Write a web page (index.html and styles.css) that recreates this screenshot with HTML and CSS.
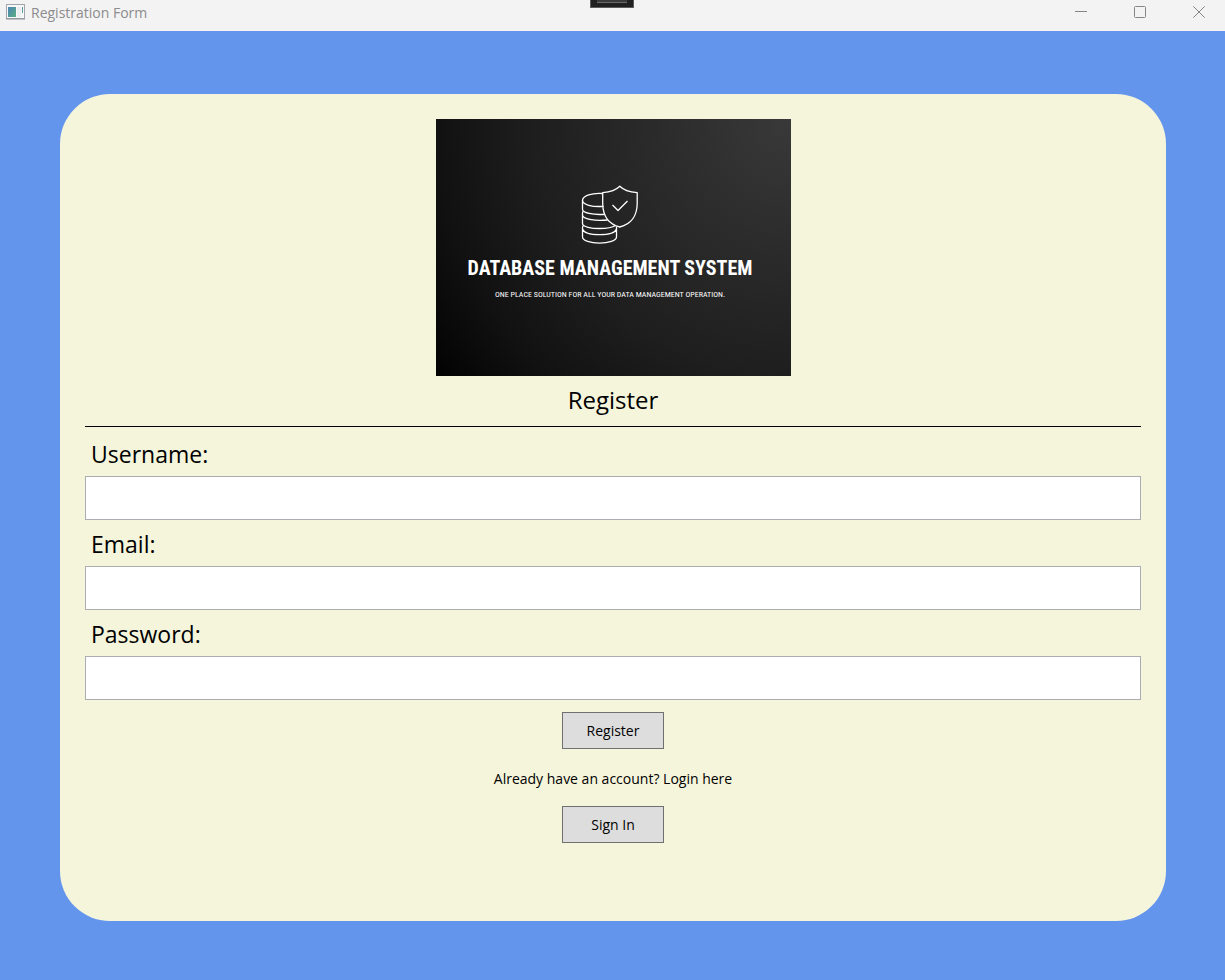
FILE: index.html
```html
<!DOCTYPE html>
<html lang="en">
<head>
<meta charset="utf-8">
<meta name="viewport" content="width=device-width, initial-scale=1">
<title>Registration Form</title>
<link rel="stylesheet" href="styles.css">
</head>
<body>
<header class="titlebar">
  <svg class="app-icon" viewBox="0 0 19 16" aria-hidden="true">
    <defs><linearGradient id="pane" x1="0" y1="0" x2="1" y2="1"><stop offset="0" stop-color="#4b86b4"/><stop offset="1" stop-color="#5cae85"/></linearGradient></defs>
    <rect x=".5" y=".5" width="18" height="14" fill="#f8f8f8" stroke="#a2a6ac"/>
    <path d="M0 15h19" stroke="#8b8f96"/>
    <rect x="2" y="3" width="8" height="10" fill="url(#pane)"/>
    <rect x="11" y="3" width="4" height="10" fill="#eceef0"/>
    <rect x="16" y="3" width="1" height="6" fill="url(#pane)"/>
  </svg>
  <span class="window-title">Registration Form</span>
  <span class="debug-tab" aria-hidden="true"></span>
  <div class="window-controls">
    <button type="button" class="window-button" aria-label="Minimize"><svg viewBox="0 0 12 12"><path d="M0 5.5h12"/></svg></button>
    <button type="button" class="window-button" aria-label="Maximize"><svg viewBox="0 0 12 12"><rect x=".5" y=".5" width="11" height="11" rx="1"/></svg></button>
    <button type="button" class="window-button" aria-label="Close"><svg viewBox="0 0 12 12"><path d="M.3.3l11.4 11.4M11.7.3L.3 11.7"/></svg></button>
  </div>
</header>
<main class="backdrop">
  <form class="card">
    <div class="logo">
      <svg class="logo-mark" viewBox="0 0 58 60" aria-hidden="true">
        <path d="M21.700 8.500C11 7.500 1.500 11 1.500 15.500C1.500 19.500 11 22.300 22.500 21.300"/>
        <path d="M1.500 15.500v9c0 3 10 5.800 22.500 4.800"/>
        <path d="M2.500 26c-.7.600-1 1.200-1 2v2.500c1.500 4 13 5.700 25 4.500M1.500 30v8.500c0 3.500 9 5 17 5c7 0 13-1 16-3"/>
        <path d="M2.500 40.500c-.7.600-1 1.200-1 2v1.500c1.500 4.500 10 5.700 17 5.700s15.500-1.200 17-5.700v-2.500M1.500 44v8c0 3.500 8 6.200 17 6.200s17-2.700 17-6.200v-8"/>
        <path d="M38.800 1.200C34 6 29 7 21.700 7.700V19C22 30 27 39 38.800 42C50.500 39 56 30 56.200 19V7.700C49 7 43.500 6 38.800 1.200zM31.500 20l5.500 5.500L46.500 16"/>
      </svg>
      <p class="logo-name">DATABASE MANAGEMENT SYSTEM</p>
      <p class="logo-tagline">ONE PLACE SOLUTION FOR ALL YOUR DATA MANAGEMENT OPERATION.</p>
    </div>
    <h1 class="heading">Register</h1>
    <label class="field-label" for="username">Username:</label>
    <input class="field" id="username" name="username" type="text">
    <label class="field-label" for="email">Email:</label>
    <input class="field" id="email" name="email" type="text">
    <label class="field-label" for="password">Password:</label>
    <input class="field" id="password" name="password" type="password">
    <div class="actions">
      <button class="action" type="submit">Register</button>
      <p class="hint">Already have an account? Login here</p>
      <button class="action" type="button">Sign In</button>
    </div>
  </form>
</main>
</body>
</html>
```
FILE: styles.css
```css
* {
  box-sizing: border-box;
}

body {
  margin: 0;
  min-height: 100vh;
  display: flex;
  flex-direction: column;
  font-family: "Segoe UI", "Open Sans", "Noto Sans", sans-serif;
  font-size: 14px;
  color: #000;
}

.titlebar {
  position: relative;
  display: flex;
  align-items: flex-start;
  height: 31px;
  padding: 0 3px 0 6px;
  background: #f3f3f3;
  color: #8c8c8c;
}

.app-icon {
  width: 19px;
  height: 16px;
  margin-top: 4px;
}

.window-title {
  margin-left: 6px;
  line-height: 26px;
}

.debug-tab {
  position: absolute;
  top: 0;
  left: 50%;
  width: 44px;
  height: 8px;
  margin-left: -23px;
  border: 1px solid #5c5c5c;
  border-top: 0;
  background: linear-gradient(#3a3a3a, #3a3a3a 2px, #6a6a6a 2px, #6a6a6a 3px, transparent 3px) center top / 30px 3px no-repeat, #202020;
}

.window-controls {
  display: flex;
  gap: 13px;
  margin-left: auto;
}

.window-button {
  display: grid;
  place-items: center;
  width: 46px;
  height: 24px;
  padding: 0;
  border: 0;
  background: transparent;
}

.window-button svg {
  width: 12px;
  height: 12px;
  fill: none;
  stroke: #858585;
}

.backdrop {
  flex: 1;
  display: flex;
  padding: 63px 59px 59px 60px;
  background: #6495ed;
}

.card {
  flex: 1;
  display: flex;
  flex-direction: column;
  padding: 25px;
  border-radius: 50px;
  background: #f5f5dc;
}

.logo {
  align-self: center;
  display: flex;
  flex-direction: column;
  align-items: center;
  width: 355px;
  height: 257px;
  padding-top: 66px;
  background: radial-gradient(circle farthest-corner at top right, #393939, #1e1e1e 59%, #111 81%, #020202);
  color: #fff;
  white-space: nowrap;
}

.logo-mark {
  width: 58px;
  height: 60px;
  margin-right: 6px;
  fill: none;
  stroke: #fff;
  stroke-width: 1.3;
  stroke-linejoin: round;
}

.logo-name {
  margin: 11px 6px 0 0;
  font: bold 20px/24px "Roboto Condensed", "Liberation Sans Narrow", sans-serif;
}

.logo-tagline {
  margin: 9px 6px 0 0;
  font: 8px/12px "Roboto Condensed", "Liberation Sans Narrow", sans-serif;
}

.heading {
  margin: 0 0 3px;
  padding-bottom: 2px;
  border-bottom: 1px solid #000;
  font-size: 24px;
  font-weight: 400;
  line-height: 48px;
  text-align: center;
}

.field-label {
  padding: 2px 0 0 6px;
  font-size: 23px;
  line-height: 44px;
}

.field {
  width: 100%;
  height: 44px;
  padding: 0 6px;
  border: 1px solid #abadb3;
  background: #fff;
  font: inherit;
  font-size: 23px;
}

.actions {
  display: flex;
  flex-direction: column;
  align-items: center;
  margin-top: 12px;
}

.action {
  width: 102px;
  height: 37px;
  border: 1px solid #707070;
  background: #ddd;
  color: #000;
  font: inherit;
}

.hint {
  margin: 20px 0 17px;
  line-height: 20px;
}
```
